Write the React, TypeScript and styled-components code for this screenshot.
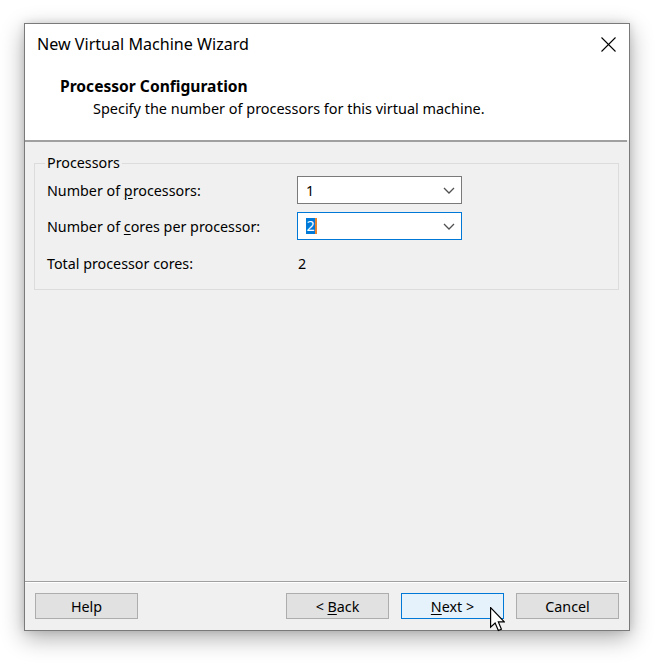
import React from "react";
import styled, { createGlobalStyle } from "styled-components";

const GlobalStyle = createGlobalStyle`
  html, body { margin: 0; padding: 0; background: #ffffff; }
  body { font-family: "Noto Sans", "Open Sans", sans-serif; color: #000; }
  * { box-sizing: border-box; }
`;

const Stage = styled.div`
  padding: 23px 0 0 24px;
  width: 660px;
  height: 663px;
`;

const Window = styled.div`
  position: relative;
  width: 606px;
  height: 608px;
  border: 1px solid #7a7a7a;
  background: #f0f0f0;
  box-shadow: 0 7px 22px rgba(0, 0, 0, 0.32), 0 0 8px rgba(0, 0, 0, 0.12);
  display: flex;
  flex-direction: column;
`;

const Header = styled.div`
  background: #ffffff;
  height: 116px;
  display: flex;
  flex-direction: column;
`;

const TitleRow = styled.div`
  height: 40px;
  display: flex;
  align-items: center;
  justify-content: space-between;
  padding: 0 13px 0 12px;
`;

const TitleText = styled.div`
  font-size: 16.1px;
  line-height: 20px;
`;

const CloseBox = styled.div`
  width: 16px;
  height: 16px;
  display: flex;
  align-items: center;
  justify-content: center;
`;

const HeaderBody = styled.div`
  padding: 12px 0 0 35px;
`;

const Heading = styled.div`
  font-size: 15.6px;
  font-weight: 700;
  line-height: 20px;
`;

const SubHeading = styled.div`
  font-size: 14.45px;
  line-height: 20px;
  margin-top: 3px;
  padding-left: 33px;
`;

const HeaderRule = styled.div`
  height: 2px;
  background: #a0a0a0;
  margin-right: 2px;
`;

const Content = styled.div`
  flex: 1;
  padding: 12px 10px 0 9px;
`;

const GroupBox = styled.fieldset`
  margin: 0;
  border: 1px solid #dcdcdc;
  padding: 0 10px 10px 10px;
  height: 136px;
  display: grid;
  grid-template-columns: 252px 165px;
  grid-auto-rows: min-content;
  align-content: start;
  row-gap: 8px;
`;

const Legend = styled.legend`
  font-size: 14.3px;
  line-height: 18px;
  padding: 0 2px;
`;

const Label = styled.div<{ $first?: boolean }>`
  font-size: 14.3px;
  display: flex;
  align-items: center;
  padding-left: 2px;
  height: 28px;
  margin-top: ${(p) => (p.$first ? "4px" : "0")};
`;

const Combo = styled.div<{ $focused?: boolean; $first?: boolean }>`
  height: 28px;
  margin-top: ${(p) => (p.$first ? "4px" : "0")};
  background: #ffffff;
  border: 1px solid ${(p) => (p.$focused ? "#0078d7" : "#7a7a7a")};
  display: flex;
  align-items: center;
  justify-content: space-between;
  padding: 0 6px 0 8px;
  font-size: 14.3px;
`;

const ComboValue = styled.span`
  display: flex;
  align-items: center;
`;

const Selected = styled.span`
  background: #0078d7;
  color: #ffffff;
  line-height: 16px;
  padding: 0 0.5px;
`;

const Caret = styled.span`
  width: 2px;
  height: 16px;
  background: #e8842e;
`;

const Value = styled.div`
  font-size: 14.3px;
  height: 28px;
  display: flex;
  align-items: center;
  padding-left: 1px;
`;

const TotalLabel = styled(Label)`
  margin-top: 1px;
`;

const TotalValue = styled(Value)`
  margin-top: 1px;
`;

const FooterRule = styled.div`
  height: 2px;
  border-top: 1px solid #a0a0a0;
  border-bottom: 1px solid #ffffff;
  margin-right: 2px;
`;

const Footer = styled.div`
  height: 47px;
  display: flex;
  align-items: flex-start;
  padding: 10px 10px 0 10px;
`;

const Spacer = styled.div`
  flex: 1;
`;

const Button = styled.button<{ $default?: boolean }>`
  width: 103px;
  height: 26px;
  margin-left: ${(p) => (p.$default ? "12px" : "0")};
  margin-right: ${(p) => (p.$default ? "12px" : "0")};
  background: ${(p) => (p.$default ? "#e5f1fb" : "#e1e1e1")};
  border: 1px solid ${(p) => (p.$default ? "#0078d7" : "#adadad")};
  font-family: "Noto Sans", "Open Sans", sans-serif;
  font-size: 14.3px;
  color: #000;
  padding: 0;
  display: flex;
  align-items: center;
  justify-content: center;
`;

const U = styled.span`
  text-decoration: underline;
  text-underline-offset: 2px;
`;

const Cursor = styled.svg`
  position: absolute;
  left: 465px;
  top: 583px;
`;

function Chevron() {
  return (
    <svg width="12" height="7" viewBox="0 0 12 7">
      <polyline points="1,1 6,6 11,1" fill="none" stroke="#505050" strokeWidth="1.3" />
    </svg>
  );
}

export default function App() {
  return (
    <Stage>
      <GlobalStyle />
      <Window>
        <Header>
          <TitleRow>
            <TitleText>New Virtual Machine Wizard</TitleText>
            <CloseBox>
              <svg width="15" height="15" viewBox="0 0 15 15">
                <line x1="0.5" y1="0.5" x2="14.5" y2="14.5" stroke="#000" strokeWidth="1.1" />
                <line x1="14.5" y1="0.5" x2="0.5" y2="14.5" stroke="#000" strokeWidth="1.1" />
              </svg>
            </CloseBox>
          </TitleRow>
          <HeaderBody>
            <Heading>Processor Configuration</Heading>
            <SubHeading>Specify the number of processors for this virtual machine.</SubHeading>
          </HeaderBody>
        </Header>
        <HeaderRule />
        <Content>
          <GroupBox>
            <Legend>Processors</Legend>
            <Label $first>
              <span>
                Number of <U>p</U>rocessors:
              </span>
            </Label>
            <Combo $first>
              <ComboValue>1</ComboValue>
              <Chevron />
            </Combo>
            <Label>
              <span>
                Number of <U>c</U>ores per processor:
              </span>
            </Label>
            <Combo $focused>
              <ComboValue>
                <Selected>2</Selected>
                <Caret />
              </ComboValue>
              <Chevron />
            </Combo>
            <TotalLabel>Total processor cores:</TotalLabel>
            <TotalValue>2</TotalValue>
          </GroupBox>
        </Content>
        <FooterRule />
        <Footer>
          <Button>Help</Button>
          <Spacer />
          <Button>
            &lt;&nbsp;<U>B</U>ack
          </Button>
          <Button $default>
            <U>N</U>ext &gt;
          </Button>
          <Button>Cancel</Button>
        </Footer>
        <Cursor width="15" height="25" viewBox="0 0 12.6 21">
          <path
            d="M0.5 0.5 L0.5 17 L4.3 13.4 L7 19.8 L9.6 18.7 L7 12.5 L12 12.5 Z"
            fill="#ffffff"
            stroke="#000000"
            strokeWidth="1"
            strokeLinejoin="miter"
          />
        </Cursor>
      </Window>
    </Stage>
  );
}
